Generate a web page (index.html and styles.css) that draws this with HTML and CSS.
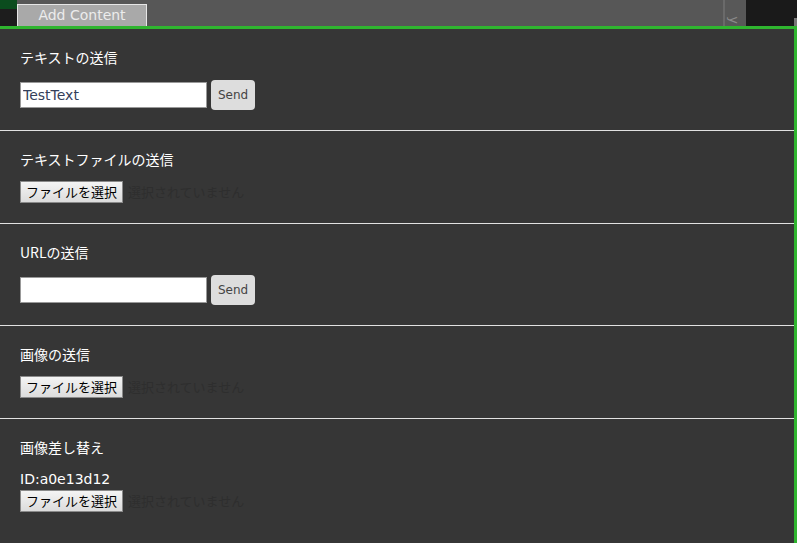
FILE: index.html
```html
<!DOCTYPE html>
<html lang="ja">
<head>
<meta charset="utf-8">
<link rel="stylesheet" href="styles.css">
</head>
<body>
<div class="topbar">
  <div class="corner"><div class="corner-green"></div></div>
  <div class="tabs">
    <div class="add-btn">Add Content</div>
  </div>
  <div class="side-tab"><span class="side-label">y</span></div>
  <div class="dark-area"><div class="edge-bit"></div></div>
</div>
<div class="panel">
  <div class="section">
    <div class="title">テキストの送信</div>
    <div class="row row-tall">
      <input class="text-input" type="text" value="TestText">
      <button class="send-btn">Send</button>
    </div>
  </div>
  <div class="section">
    <div class="title">テキストファイルの送信</div>
    <div class="row">
      <span class="file-btn">ファイルを選択</span><span class="file-none">選択されていません</span>
    </div>
  </div>
  <div class="section">
    <div class="title">URLの送信</div>
    <div class="row row-tall">
      <input class="text-input" type="text" value="">
      <button class="send-btn">Send</button>
    </div>
  </div>
  <div class="section">
    <div class="title">画像の送信</div>
    <div class="row">
      <span class="file-btn">ファイルを選択</span><span class="file-none">選択されていません</span>
    </div>
  </div>
  <div class="section last">
    <div class="title">画像差し替え</div>
    <div class="id-line">ID:a0e13d12</div>
    <div class="row">
      <span class="file-btn">ファイルを選択</span><span class="file-none">選択されていません</span>
    </div>
  </div>
</div>
</body>
</html>
```

FILE: styles.css
```css
* { box-sizing: border-box; }
html, body { margin: 0; padding: 0; height: 100%; overflow: hidden; }
body {
  background: #363636;
  font-family: "Noto Sans CJK JP", "DejaVu Sans", sans-serif;
  color: #fff;
}
.topbar {
  height: 26px;
  display: flex;
  background: #575757;
}
.corner {
  width: 17px;
  background: #1d1d1d;
}
.corner-green {
  height: 9px;
  background: #0b4c1e;
}
.tabs {
  flex: 1;
  display: flex;
  align-items: flex-end;
}
.add-btn {
  width: 130px;
  height: 22px;
  background: #a9a9a9;
  border: 1px solid #e6e6e6;
  border-bottom: none;
  color: #ececec;
  font-family: "DejaVu Sans", sans-serif;
  font-size: 14px;
  line-height: 20px;
  text-align: center;
}
.side-tab {
  width: 23px;
  border-left: 2px solid #6a6a6a;
  background: #585858;
  position: relative;
  overflow: hidden;
}
.side-label {
  position: absolute;
  left: 5px;
  top: 14px;
  color: #8a8a8a;
  font-family: "DejaVu Sans", sans-serif;
  font-size: 13px;
  transform: rotate(90deg);
  line-height: 12px;
}
.dark-area {
  width: 51px;
  background: #1a1a1a;
  display: flex;
  justify-content: flex-end;
  align-items: flex-end;
}
.edge-bit {
  width: 3px;
  height: 8px;
  background: #777;
}
.panel {
  border-top: 3px solid #2fb52f;
  border-right: 3px solid #2fb52f;
  height: calc(100% - 26px);
  background: #363636;
}
.section {
  padding: 18px 20px 20px;
  border-bottom: 1px solid #e2e2e2;
}
.section.last { border-bottom: none; }
.title {
  font-size: 14px;
  line-height: 20px;
  height: 20px;
  margin-bottom: 12px;
  color: #fff;
}
.row {
  display: flex;
  align-items: center;
  height: 22px;
}
.row-tall { height: 31px; }
.text-input {
  width: 187px;
  height: 26px;
  border: 1px solid #999;
  background: #fff;
  padding: 0 2px;
  font-family: "DejaVu Sans", sans-serif;
  font-size: 14px;
  color: #34405a;
  outline: none;
  margin: 0;
}
.send-btn {
  margin-left: 4px;
  width: 44px;
  height: 30px;
  border: none;
  border-radius: 4px;
  background: #dddddd;
  color: #444;
  font-family: "DejaVu Sans", sans-serif;
  font-size: 12px;
  padding: 0;
}
.file-btn {
  display: inline-block;
  width: 103px;
  height: 22px;
  border: 1px solid #8a8a8a;
  background: linear-gradient(#f4f4f4, #dcdcdc);
  color: #000;
  font-size: 13px;
  line-height: 20px;
  text-align: center;
}
.file-none {
  margin-left: 5px;
  font-size: 13px;
  line-height: 20px;
  color: #2e2e2e;
}
.id-line {
  font-family: "DejaVu Sans", sans-serif;
  font-size: 14px;
  line-height: 20px;
  height: 21px;
  color: #fff;
}
```
